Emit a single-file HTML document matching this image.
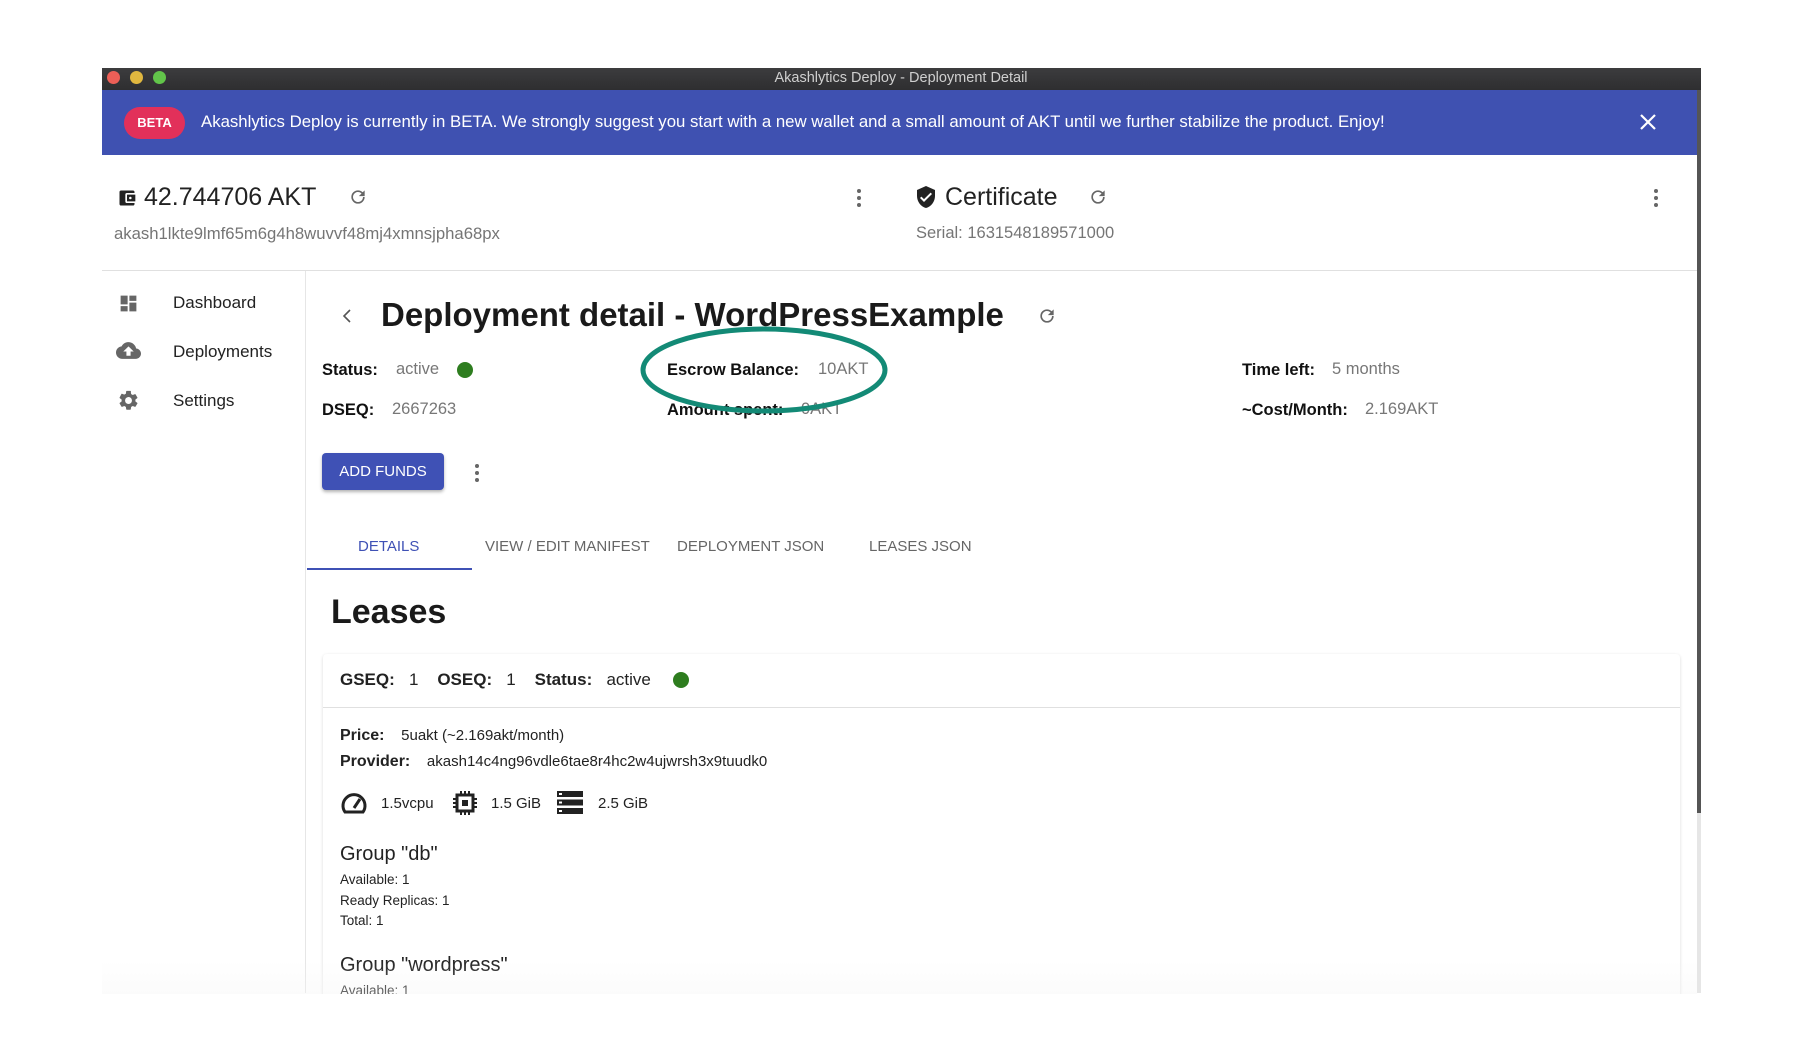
<!DOCTYPE html>
<html><head><meta charset="utf-8"><style>
*{margin:0;padding:0;box-sizing:border-box}
body{width:1804px;height:1062px;background:#fff;position:relative;overflow:hidden;font-family:"Liberation Sans",Arial,sans-serif;color:#222}
.a{position:absolute;white-space:nowrap}
.lbl{font-weight:bold;font-size:16.5px;color:#111}
.val{font-size:16.5px;color:#777}
</style></head><body>
<div class="a" style="left:102px;top:68px;width:1599px;height:22px;background:linear-gradient(#3c3c3e,#2e2e30)"></div>
<div class="a" style="left:107px;top:71px;width:13px;height:13px;border-radius:50%;background:#ec5f57"></div>
<div class="a" style="left:130px;top:71px;width:13px;height:13px;border-radius:50%;background:#e0b73f"></div>
<div class="a" style="left:153px;top:71px;width:13px;height:13px;border-radius:50%;background:#62c54a"></div>
<div class="a" style="left:0;width:1804px;top:70px;text-align:center;font-size:14.5px;color:#cfcfcf;padding-right:2px">Akashlytics Deploy - Deployment Detail</div>
<div class="a" style="left:102px;top:90px;width:1595px;height:65px;background:#3f51b1"></div>
<div class="a" style="left:124px;top:107px;width:61px;height:32px;border-radius:16px;background:#e2305a;color:#fff;font-weight:bold;font-size:13px;text-align:center;line-height:32px">BETA</div>
<div class="a" style="left:201px;top:112px;font-size:16.8px;color:#fff">Akashlytics Deploy is currently in BETA. We strongly suggest you start with a new wallet and a small amount of AKT until we further stabilize the product. Enjoy!</div>
<svg class="a" style="left:1639px;top:113px" width="18" height="18"><path d="M2 2L16 16M16 2L2 16" stroke="#fff" stroke-width="2.2"/></svg>
<div class="a" style="left:1697px;top:90px;width:4px;height:723px;background:#555"></div>
<div class="a" style="left:1697px;top:813px;width:4px;height:180px;background:#e6e6e6"></div>
<svg class="a" style="left:117px;top:188px" width="20" height="20" viewBox="0 0 24 24"><path d="M21 18v1a2 2 0 01-2 2H5a2 2 0 01-2-2V5a2 2 0 012-2h14a2 2 0 012 2v1h-9a2 2 0 00-2 2v8a2 2 0 002 2h9zm-9-2h10V8H12v8zm4-2.5a1.5 1.5 0 110-3 1.5 1.5 0 010 3z" fill="#222"/></svg>
<div class="a" style="left:144px;top:183px;font-size:25px;color:#222">42.744706 AKT</div>
<svg class="a" style="left:348px;top:187px" width="20" height="20" viewBox="0 0 24 24"><path d="M17.65 6.35A7.96 7.96 0 0012 4a8 8 0 108 8h-2a6 6 0 11-1.76-4.24L13 11h7V4l-2.35 2.35z" fill="#666"/></svg>
<svg class="a" style="left:855px;top:187px" width="8" height="22"><circle cx="4" cy="4" r="2" fill="#666"/><circle cx="4" cy="11" r="2" fill="#666"/><circle cx="4" cy="18" r="2" fill="#666"/></svg>
<div class="a" style="left:114px;top:224px;font-size:16.7px;color:#757575">akash1lkte9lmf65m6g4h8wuvvf48mj4xmnsjpha68px</div>
<svg class="a" style="left:914px;top:185px" width="24" height="24" viewBox="0 0 24 24"><path d="M12 1L3 5v6c0 5.55 3.84 10.74 9 12 5.16-1.26 9-6.45 9-12V5l-9-4zm-2 16l-4-4 1.41-1.41L10 14.17l6.59-6.59L18 9l-8 8z" fill="#222"/></svg>
<div class="a" style="left:945px;top:183px;font-size:25px;color:#222">Certificate</div>
<svg class="a" style="left:1088px;top:187px" width="20" height="20" viewBox="0 0 24 24"><path d="M17.65 6.35A7.96 7.96 0 0012 4a8 8 0 108 8h-2a6 6 0 11-1.76-4.24L13 11h7V4l-2.35 2.35z" fill="#666"/></svg>
<div class="a" style="left:916px;top:224px;font-size:16.5px;color:#757575">Serial: 1631548189571000</div>
<svg class="a" style="left:1652px;top:187px" width="8" height="22"><circle cx="4" cy="4" r="2" fill="#666"/><circle cx="4" cy="11" r="2" fill="#666"/><circle cx="4" cy="18" r="2" fill="#666"/></svg>
<div class="a" style="left:102px;top:270px;width:1595px;height:1px;background:#e0e0e0"></div>
<div class="a" style="left:305px;top:271px;width:1px;height:722px;background:#e6e6e6"></div>
<svg class="a" style="left:118px;top:293px" width="21" height="21" viewBox="0 0 24 24"><path d="M3 13h8V3H3v10zm0 8h8v-6H3v6zm10 0h8V11h-8v10zm0-18v6h8V3h-8z" fill="#666"/></svg>
<div class="a" style="left:173px;top:293px;font-size:17px;color:#222">Dashboard</div>
<svg class="a" style="left:116px;top:338px" width="25" height="25" viewBox="0 0 24 24"><path d="M19.35 10.04A7.49 7.49 0 0012 4C9.11 4 6.6 5.64 5.35 8.04A5.99 5.99 0 000 14c0 3.310 2.69 6 6 6h13c2.76 0 5-2.24 5-5 0-2.64-2.05-4.78-4.65-4.96zM14 13v4h-4v-4H7l5-5 5 5h-3z" fill="#666"/></svg>
<div class="a" style="left:173px;top:342px;font-size:17px;color:#222">Deployments</div>
<svg class="a" style="left:117px;top:389px" width="23" height="23" viewBox="0 0 24 24"><path d="M19.14 12.94a7.07 7.07 0 000-1.88l2.03-1.58a.49.49 0 00.12-.61l-1.92-3.32a.49.49 0 00-.59-.22l-2.39.96a7 7 0 00-1.62-.94l-.36-2.54A.48.48 0 0013.930 2h-3.84a.48.48 0 00-.48.41l-.36 2.54a7.4 7.4 0 00-1.62.94l-2.39-.96a.49.49 0 00-.59.22L2.73 8.87a.47.47 0 00.12.61l2.03 1.58a7.3 7.3 0 000 1.88l-2.03 1.58a.49.49 0 00-.12.61l1.92 3.32c.12.22.37.29.59.22l2.39-.96c.5.38 1.04.7 1.62.94l.36 2.54c.05.24.24.41.48.41h3.84c.24 0 .44-.17.47-.41l.36-2.54a7 7 0 001.62-.94l2.39.96c.22.08.47 0 .59-.22l1.92-3.32a.47.47 0 00-.12-.61l-2.01-1.58zM12 15.6a3.6 3.6 0 110-7.2 3.6 3.6 0 010 7.2z" fill="#666"/></svg>
<div class="a" style="left:173px;top:391px;font-size:17px;color:#222">Settings</div>
<svg class="a" style="left:341px;top:308px" width="12" height="16"><path d="M9 2L3 8l6 6" stroke="#555" stroke-width="1.6" fill="none"/></svg>
<div class="a" style="left:381px;top:296px;font-size:33px;font-weight:bold;color:#1a1a1a">Deployment detail - WordPressExample</div>
<svg class="a" style="left:1037px;top:306px" width="20" height="20" viewBox="0 0 24 24"><path d="M17.65 6.35A7.96 7.96 0 0012 4a8 8 0 108 8h-2a6 6 0 11-1.76-4.24L13 11h7V4l-2.35 2.35z" fill="#666"/></svg>
<div class="a lbl" style="left:322px;top:361px">Status:</div>
<div class="a val" style="left:396px;top:360px">active</div>
<div class="a" style="left:457px;top:362px;width:16px;height:16px;border-radius:50%;background:#2e7d1f"></div>
<div class="a lbl" style="left:667px;top:361px">Escrow Balance:</div>
<div class="a val" style="left:818px;top:360px">10AKT</div>
<div class="a lbl" style="left:1242px;top:361px">Time left:</div>
<div class="a val" style="left:1332px;top:360px">5 months</div>
<div class="a lbl" style="left:322px;top:401px">DSEQ:</div>
<div class="a val" style="left:392px;top:400px">2667263</div>
<div class="a lbl" style="left:667px;top:401px">Amount spent:</div>
<div class="a val" style="left:801px;top:400px">0AKT</div>
<div class="a lbl" style="left:1242px;top:401px">~Cost/Month:</div>
<div class="a val" style="left:1365px;top:400px">2.169AKT</div>
<svg class="a" style="left:636px;top:323px" width="260" height="96"><ellipse cx="128" cy="47" rx="121" ry="41" fill="none" stroke="#138a76" stroke-width="5"/></svg>
<div class="a" style="left:322px;top:453px;width:122px;height:37px;background:#3f51b5;border-radius:4px;box-shadow:0 2px 3px rgba(0,0,0,.3);color:#fff;font-size:15px;text-align:center;line-height:37px">ADD FUNDS</div>
<svg class="a" style="left:473px;top:462px" width="8" height="22"><circle cx="4" cy="4" r="2" fill="#666"/><circle cx="4" cy="11" r="2" fill="#666"/><circle cx="4" cy="18" r="2" fill="#666"/></svg>
<div class="a" style="left:358px;top:538px;font-size:15px;color:#3f51b5">DETAILS</div>
<div class="a" style="left:485px;top:538px;font-size:15px;color:#666">VIEW / EDIT MANIFEST</div>
<div class="a" style="left:677px;top:538px;font-size:15px;color:#666">DEPLOYMENT JSON</div>
<div class="a" style="left:869px;top:538px;font-size:15px;color:#666">LEASES JSON</div>
<div class="a" style="left:307px;top:568px;width:165px;height:2px;background:#3f51b5"></div>
<div class="a" style="left:331px;top:593px;font-size:34px;font-weight:bold;color:#1a1a1a">Leases</div>
<div class="a" style="left:323px;top:654px;width:1357px;height:350px;border-radius:4px;box-shadow:0 1px 3px rgba(0,0,0,.15)"></div>
<div class="a" style="left:323px;top:707px;width:1357px;height:1px;background:#e0e0e0"></div>
<div class="a" style="left:340px;top:670px;font-size:17px;color:#222"><b>GSEQ:</b>&nbsp;&nbsp; 1&nbsp;&nbsp;&nbsp; <b>OSEQ:</b>&nbsp;&nbsp; 1&nbsp;&nbsp;&nbsp; <b>Status:</b>&nbsp;&nbsp; active</div>
<div class="a" style="left:673px;top:672px;width:16px;height:16px;border-radius:50%;background:#2e7d1f"></div>
<div class="a" style="left:340px;top:727px;font-size:15px"><b style="font-size:16px">Price:</b>&nbsp;&nbsp;&nbsp; 5uakt (~2.169akt/month)</div>
<div class="a" style="left:340px;top:753px;font-size:15px"><b style="font-size:16px">Provider:</b>&nbsp;&nbsp;&nbsp; akash14c4ng96vdle6tae8r4hc2w4ujwrsh3x9tuudk0</div>
<svg class="a" style="left:340px;top:791px" width="28" height="24" viewBox="0 0 28 24"><path d="M5 21a11 11 0 1118 0z" fill="none" stroke="#222" stroke-width="3"/><path d="M14 17l6-9" stroke="#222" stroke-width="3"/></svg>
<div class="a" style="left:381px;top:795px;font-size:15px">1.5vcpu</div>
<svg class="a" style="left:453px;top:790px" width="24" height="26" viewBox="0 0 24 26"><rect x="4" y="5" width="16" height="16" fill="none" stroke="#222" stroke-width="3"/><rect x="9" y="10" width="6" height="6" fill="#222"/><path d="M8 1v4M12 1v4M16 1v4M8 21v4M12 21v4M16 21v4M0 9h4M0 13h4M0 17h4M20 9h4M20 13h4M20 17h4" stroke="#222" stroke-width="2"/></svg>
<div class="a" style="left:491px;top:795px;font-size:15px">1.5 GiB</div>
<svg class="a" style="left:557px;top:791px" width="26" height="23"><rect x="0" y="0" width="26" height="6" fill="#222"/><rect x="0" y="8.5" width="26" height="6" fill="#222"/><rect x="0" y="17" width="26" height="6" fill="#222"/><rect x="2" y="2" width="3" height="2" fill="#fff"/><rect x="2" y="10.5" width="3" height="2" fill="#fff"/><rect x="2" y="19" width="3" height="2" fill="#fff"/></svg>
<div class="a" style="left:598px;top:795px;font-size:15px">2.5 GiB</div>
<div class="a" style="left:340px;top:843px;font-size:20px;color:#222">Group "db"</div>
<div class="a" style="left:340px;top:872px;font-size:13.5px">Available: 1</div>
<div class="a" style="left:340px;top:893px;font-size:13.5px">Ready Replicas: 1</div>
<div class="a" style="left:340px;top:913px;font-size:13.5px">Total: 1</div>
<div class="a" style="left:340px;top:954px;font-size:20px;color:#222">Group "wordpress"</div>
<div class="a" style="left:340px;top:983px;font-size:13.5px">Available: 1</div>
<div class="a" style="left:102px;top:960px;width:1595px;height:34px;background:linear-gradient(rgba(255,255,255,0),rgba(244,244,244,.35))"></div>
<div class="a" style="left:0;top:994px;width:1804px;height:68px;background:#fff"></div>
</body></html>
